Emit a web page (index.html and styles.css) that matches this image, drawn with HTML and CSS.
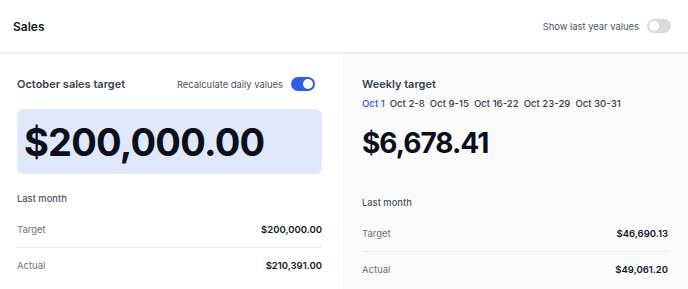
FILE: index.html
```html
<!DOCTYPE html>
<html lang="en">
<head>
    <meta charset="UTF-8">
    <meta name="viewport" content="width=device-width, initial-scale=1.0">
    <title>Sales</title>
    <link rel="stylesheet" href="styles.css">
</head>
<body>
    <header>
        <h1 class="page-title">Sales</h1>
        <label class="switch-row">
            <span>Show last year values</span>
            <span class="switch"></span>
        </label>
    </header>
    <main>
        <!-- Monthly target -->
        <section class="panel">
            <div class="panel-head">
                <h2>October sales target</h2>
                <label class="switch-row">
                    <span>Recalculate daily values</span>
                    <span class="switch on"></span>
                </label>
            </div>
            <div class="big-value">$200,000.00</div>
            <div class="sub-title">Last month</div>
            <div class="stats">
                <div class="stat"><span>Target</span><b>$200,000.00</b></div>
                <div class="stat"><span>Actual</span><b>$210,391.00</b></div>
            </div>
        </section>

        <!-- Weekly target -->
        <section class="panel panel-alt">
            <div class="panel-head">
                <h2>Weekly target</h2>
            </div>
            <nav class="weeks">
                <a href="#" class="active">Oct 1</a>
                <a href="#">Oct 2-8</a>
                <a href="#">Oct 9-15</a>
                <a href="#">Oct 16-22</a>
                <a href="#">Oct 23-29</a>
                <a href="#">Oct 30-31</a>
            </nav>
            <div class="week-value">$6,678.41</div>
            <div class="sub-title">Last month</div>
            <div class="stats">
                <div class="stat"><span>Target</span><b>$46,690.13</b></div>
                <div class="stat"><span>Actual</span><b>$49,061.20</b></div>
            </div>
        </section>
    </main>
</body>
</html>
```

FILE: styles.css
```css
* {
    margin: 0;
    padding: 0;
    box-sizing: border-box;
}
body {
    font-family: Inter, "Noto Sans", sans-serif;
    background-color: #fff;
    color: #111827;
    width: 688px;
    height: 289px;
    overflow: hidden;
}
header {
    height: 54px;
    padding: 0 17px 0 13px;
    display: flex;
    align-items: center;
    justify-content: space-between;
    border-bottom: 2px solid #eeeff1;
}
.page-title {
    font-size: 12px;
    font-weight: 600;
    color: #111827;
}
.switch-row {
    display: flex;
    align-items: center;
    gap: 8px;
    font-size: 9.4px;
    color: #4b5563;
    cursor: pointer;
}
.switch {
    position: relative;
    width: 24px;
    height: 14px;
    border-radius: 7px;
    background-color: #d9dadd;
}
.switch::after {
    content: "";
    position: absolute;
    top: 2px;
    left: 2px;
    width: 10px;
    height: 10px;
    border-radius: 50%;
    background-color: #fff;
}
.switch.on {
    background-color: #2f5ee8;
}
.switch.on::after {
    left: 12px;
}
main {
    display: grid;
    grid-template-columns: 343px 1fr;
    height: 235px;
}
.panel {
    padding: 20px 21px 0 17px;
}
.panel-alt {
    background-color: #fafafa;
    padding: 20px 20px 0 19px;
}
.panel-head {
    height: 20px;
    padding-right: 7px;
    display: flex;
    align-items: center;
    justify-content: space-between;
}
.panel-head h2 {
    font-size: 11px;
    font-weight: 600;
    color: #374151;
}
.big-value {
    margin-top: 15px;
    height: 65px;
    padding: 0 7px;
    display: flex;
    align-items: center;
    background-color: #dfe8fa;
    border-radius: 7px;
    font-size: 38px;
    font-weight: 700;
    letter-spacing: -0.8px;
    color: #0b0f1a;
}
.weeks {
    height: 16px;
    margin-top: 1px;
    display: flex;
    align-items: center;
    gap: 5px;
}
.weeks a {
    font-size: 9.6px;
    font-weight: 500;
    color: #374151;
    text-decoration: none;
}
.weeks a.active {
    color: #2f5ee8;
}
.week-value {
    margin-top: 14px;
    line-height: 36px;
    font-size: 28px;
    font-weight: 700;
    letter-spacing: -1px;
    color: #0b0f1a;
}
.sub-title {
    margin-top: 17px;
    line-height: 16px;
    font-size: 9.4px;
    font-weight: 500;
    color: #4b5563;
}
.week-value + .sub-title {
    margin-top: 34px;
}
.stats {
    margin-top: 5px;
}
.stat {
    height: 35px;
    display: flex;
    align-items: center;
    justify-content: space-between;
    font-size: 9.5px;
}
.stat:first-child {
    border-bottom: 1px solid #e9eaec;
    height: 36px;
}
.stat span {
    color: #6b7280;
}
.stat b {
    font-weight: 600;
    color: #111827;
}
```
